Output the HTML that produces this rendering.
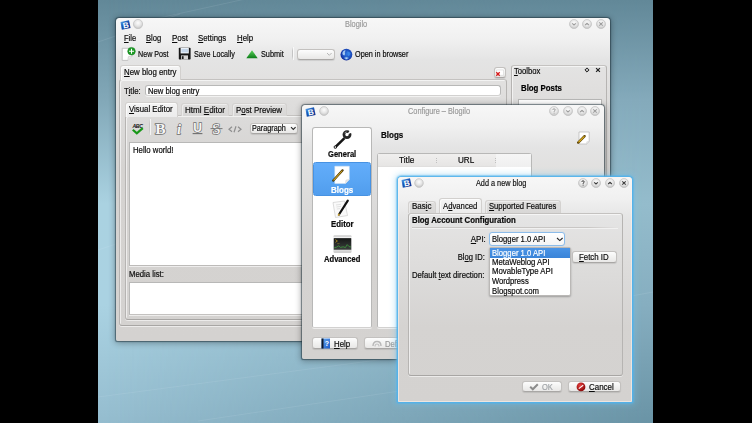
<!DOCTYPE html>
<html><head><meta charset="utf-8">
<style>
*{box-sizing:border-box}
body{margin:0;width:752px;height:423px;background:#000;position:relative;overflow:hidden;font-family:"Liberation Sans",sans-serif;font-size:8.4px;color:#0a0a0a;letter-spacing:0px}
.a{position:absolute}
svg.a{overflow:visible}
.t{position:absolute;white-space:nowrap;line-height:10px;height:10px;-webkit-text-stroke:0.18px currentColor}
.b{font-weight:bold;letter-spacing:0px;-webkit-text-stroke:0.2px currentColor}
.u{text-decoration:underline;text-decoration-thickness:0.8px;text-underline-offset:0.7px}
.grey{color:#9a9a9a}
.win{box-shadow:0 0 1px 0.6px rgba(30,50,60,0.55),0 1px 6px 1px rgba(0,0,0,0.32)}
#desk{left:98px;top:0;width:555px;height:423px;background:linear-gradient(180deg,#628898 0px,#82a8b8 100px,#aad2e1 204px,#aad2e2 304px,#96bed0 414px,#94bcce 423px)}
#desk2{left:98px;top:0;width:555px;height:423px;background:linear-gradient(180deg,#628898 0px,#84aabb 100px,#94bccc 204px,#86aec0 304px,#6c96a8 414px,#6a94a6 423px);
 -webkit-mask-image:linear-gradient(90deg,rgba(0,0,0,0) 8px,rgba(0,0,0,1) 546px);mask-image:linear-gradient(90deg,rgba(0,0,0,0) 8px,rgba(0,0,0,1) 546px)}
</style></head><body>
<div id="desk" class="a"></div><div id="desk2" class="a"></div>
<svg class="a" style="left:0;top:0" width="752" height="423"><g stroke="rgba(235,248,255,0.11)" stroke-width="0.9" fill="none">
<path d="M98 397 L400 357"/><path d="M198 421 L420 388"/><path d="M150 20 L250 -2"/><path d="M98 42 L180 14"/><path d="M610 300 L653 292"/><path d="M98 250 L116 244"/>
</g></svg>

<div class="a win" style="left:116px;top:18px;width:494.00px;height:322.50px;border-radius:3.5px 3.5px 2px 2px;background:linear-gradient(180deg,#f7f7f7 0px,#f0f0f0 22px,#e4e4e4 42px,#e1e0df 65px,#dbdad9 105px,#d5d3d1 150px,#d4d2d0 100%);"></div>
<svg class="a" style="left:119.5px;top:19.5px" width="11" height="10" viewBox="0 0 11 10"><defs><linearGradient id="ai119" x1="0" y1="0" x2="1" y2="1"><stop offset="0" stop-color="#6ab4f4"/><stop offset="0.4" stop-color="#1a5ab8"/><stop offset="1" stop-color="#082a88"/></linearGradient></defs><path d="M0.5 2.0 L9.0 0.3 L10.6 8.0 L1.8 9.8 Z" fill="url(#ai119)"/><text x="5.7" y="8.0" font-family="Liberation Sans" font-weight="bold" font-size="8" fill="#fff" text-anchor="middle" transform="rotate(-11 5.5 5)">B</text></svg>
<svg class="a" style="left:132px;top:18px" width="12" height="12" viewBox="0 0 12 12"><defs><radialGradient id="g1380240" cx="50%" cy="38%" r="60%"><stop offset="0" stop-color="#fdfdfd"/><stop offset="0.6" stop-color="#e4e4e4"/><stop offset="1" stop-color="#c4c4c4"/></radialGradient></defs><circle cx="6" cy="6.4" r="4.6" fill="rgba(0,0,0,0.10)"/><circle cx="6" cy="6" r="4.6" fill="url(#g1380240)" stroke="#c4c4c4" stroke-width="0.7"/></svg>
<div class="t grey" style="top:18.55px;left:344.50px;transform-origin:0 0;transform:scaleX(0.884);">Blogilo</div>
<svg class="a" style="left:567.5px;top:18px" width="12" height="12" viewBox="0 0 12 12"><defs><radialGradient id="g5735240" cx="50%" cy="38%" r="60%"><stop offset="0" stop-color="#fdfdfd"/><stop offset="0.6" stop-color="#e4e4e4"/><stop offset="1" stop-color="#c4c4c4"/></radialGradient></defs><circle cx="6" cy="6.4" r="4.5" fill="rgba(0,0,0,0.10)"/><circle cx="6" cy="6" r="4.5" fill="url(#g5735240)" stroke="#c4c4c4" stroke-width="0.7"/><path d="M4.2 5.3 L6 7 L7.8 5.3" stroke="#9c9c9c" stroke-width="1.1" fill="none"/></svg>
<svg class="a" style="left:581.2px;top:18px" width="12" height="12" viewBox="0 0 12 12"><defs><radialGradient id="g5872240" cx="50%" cy="38%" r="60%"><stop offset="0" stop-color="#fdfdfd"/><stop offset="0.6" stop-color="#e4e4e4"/><stop offset="1" stop-color="#c4c4c4"/></radialGradient></defs><circle cx="6" cy="6.4" r="4.5" fill="rgba(0,0,0,0.10)"/><circle cx="6" cy="6" r="4.5" fill="url(#g5872240)" stroke="#c4c4c4" stroke-width="0.7"/><path d="M4.2 7 L6 5.3 L7.8 7" stroke="#9c9c9c" stroke-width="1.1" fill="none"/></svg>
<svg class="a" style="left:595px;top:18px" width="12" height="12" viewBox="0 0 12 12"><defs><radialGradient id="g6010240" cx="50%" cy="38%" r="60%"><stop offset="0" stop-color="#fdfdfd"/><stop offset="0.6" stop-color="#e4e4e4"/><stop offset="1" stop-color="#c4c4c4"/></radialGradient></defs><circle cx="6" cy="6.4" r="4.5" fill="rgba(0,0,0,0.10)"/><circle cx="6" cy="6" r="4.5" fill="url(#g6010240)" stroke="#c4c4c4" stroke-width="0.7"/><path d="M4.3 4.3 L7.7 7.7 M7.7 4.3 L4.3 7.7" stroke="#9c9c9c" stroke-width="1.1" fill="none"/></svg>
<div class="t " style="top:33.05px;left:124.00px;transform-origin:0 0;transform:scaleX(0.901);"><span class="u">F</span>ile</div>
<div class="t " style="top:33.05px;left:146.40px;transform-origin:0 0;transform:scaleX(0.910);"><span class="u">B</span>log</div>
<div class="t " style="top:33.05px;left:171.70px;transform-origin:0 0;transform:scaleX(0.952);"><span class="u">P</span>ost</div>
<div class="t " style="top:33.05px;left:198.00px;transform-origin:0 0;transform:scaleX(0.932);"><span class="u">S</span>ettings</div>
<div class="t " style="top:33.05px;left:236.60px;transform-origin:0 0;transform:scaleX(0.937);"><span class="u">H</span>elp</div>
<svg class="a" style="left:121px;top:46px" width="16" height="15" viewBox="0 0 16 15"><path d="M1.2 2.3 L11.2 2.3 L11.2 10 L6.8 14.4 L1.2 14.4 Z" fill="#fff" stroke="#b8b8b8" stroke-width="0.8"/><path d="M6.8 14.4 L7.4 10.6 L11.2 10" fill="#ececec" stroke="#c4c4c4" stroke-width="0.6"/><circle cx="10.5" cy="5.2" r="3.8" fill="#1c9c24" stroke="#10781a" stroke-width="0.5"/><path d="M10.5 2.7 V7.7 M8 5.2 H13" stroke="#fff" stroke-width="1.05"/></svg>
<div class="t " style="top:48.55px;left:137.70px;transform-origin:0 0;transform:scaleX(0.854);">New Post</div>
<svg class="a" style="left:178px;top:47px" width="13" height="13" viewBox="0 0 13 13"><rect x="0.8" y="0.8" width="11.8" height="11.8" rx="0.8" fill="#161616"/><rect x="2.6" y="1" width="8.2" height="5.4" fill="#f4f8fc"/><rect x="3.4" y="1.8" width="6.6" height="3.6" fill="#c4d6ea"/><rect x="3" y="8.4" width="7" height="4.2" fill="#d6d6d6"/><rect x="3.8" y="9.2" width="1.8" height="2.8" fill="#1a1a1a"/></svg>
<div class="t " style="top:48.55px;left:194.00px;transform-origin:0 0;transform:scaleX(0.861);">Save Locally</div>
<svg class="a" style="left:245.5px;top:49.5px" width="12" height="9" viewBox="0 0 12 9"><defs><linearGradient id="tri" x1="0" y1="0" x2="0" y2="1"><stop offset="0" stop-color="#5ad25a"/><stop offset="1" stop-color="#0e7d1a"/></linearGradient></defs><path d="M6 0.3 L11.7 8.2 L0.3 8.2 Z" fill="url(#tri)"/></svg>
<div class="t " style="top:48.55px;left:260.60px;transform-origin:0 0;transform:scaleX(0.872);">Submit</div>
<div class="a" style="left:292px;top:47.4px;width:1.00px;height:12.60px;background:linear-gradient(180deg,rgba(0,0,0,0),#c4c4c4 30%,#c4c4c4 70%,rgba(0,0,0,0));box-shadow:1px 0 0 rgba(255,255,255,0.7)"></div>
<div class="a" style="left:296.5px;top:49px;width:38.70px;height:10.60px;border-radius:3px;background:linear-gradient(180deg,#fdfdfd 0%,#f2f2f1 50%,#e9e8e7 100%);border:1px solid #c3c1bf;border-bottom-color:#a9a7a5;box-shadow:0 1px 1px rgba(0,0,0,0.10);"></div>
<svg class="a" style="left:326px;top:52px" width="7" height="5" viewBox="0 0 7 5"><path d="M1 1 L3.3 3.3 L5.6 1" stroke="#b0b0b0" stroke-width="0.9" fill="none"/></svg>
<svg class="a" style="left:340px;top:47.5px" width="13" height="13" viewBox="0 0 13 13"><defs><radialGradient id="glb" cx="55%" cy="45%" r="60%"><stop offset="0" stop-color="#2f78e0"/><stop offset="0.7" stop-color="#1a48b8"/><stop offset="1" stop-color="#0c1c88"/></radialGradient><radialGradient id="glb2" cx="50%" cy="50%" r="50%"><stop offset="0" stop-color="#e8f8ff"/><stop offset="1" stop-color="rgba(120,200,255,0)"/></radialGradient></defs><circle cx="6.4" cy="6.6" r="5.9" fill="url(#glb)"/><path d="M2.6 4.2 Q4 1.8 5.6 2.4 L4.8 4.6 Q5.6 6.2 4.4 7.6 Q3 7.4 2.4 6 Z" fill="#b4d4f6" opacity="0.9"/><path d="M7 3.6 Q9.6 3.4 10.6 5.6 Q10 8 8.4 8.2 Q7.2 6.8 7.6 5.4 Z" fill="#3c88e8" opacity="0.9"/><ellipse cx="6.4" cy="10.2" rx="2.8" ry="1.9" fill="url(#glb2)"/></svg>
<div class="t " style="top:48.55px;left:355.00px;transform-origin:0 0;transform:scaleX(0.868);">Open in browser</div>
<div class="a" style="left:119.3px;top:79px;width:388.20px;height:246.50px;border-radius:3px;border:1px solid #b6b4b2;border-top-color:#c4c2c0;border-bottom-color:#a8a6a4;box-shadow:inset 1px 1px 0 rgba(255,255,255,0.6),0 1px 0 rgba(255,255,255,0.55);"></div>
<div class="a" style="left:119.5px;top:65.2px;width:61.10px;height:14.40px;border-radius:3px 3px 0 0;background:linear-gradient(180deg,#f4f4f4,#ececec);border:1px solid #d2d0ce;border-bottom:none;box-shadow:inset 1px 1px 0 rgba(255,255,255,0.7)"></div>
<div class="t " style="top:67.25px;left:124.00px;transform-origin:0 0;transform:scaleX(0.939);"><span class="u">N</span>ew blog entry</div>
<div class="a" style="left:493.9px;top:66.7px;width:11.80px;height:11.30px;border-radius:3px;background:linear-gradient(180deg,#fdfdfd 0%,#f2f2f1 50%,#e9e8e7 100%);border:1px solid #c3c1bf;border-bottom-color:#a9a7a5;box-shadow:0 1px 1px rgba(0,0,0,0.10);"></div>
<svg class="a" style="left:494px;top:66.7px" width="12" height="11" viewBox="0 0 12 11"><path d="M2.5 3 L9.5 3 L9.5 8.3 L2.5 8.3 Z" fill="#fff" stroke="#d0d0d0" stroke-width="0.5"/><path d="M2.3 5.3 L5.7 8.7 M5.7 5.3 L2.3 8.7" stroke="#d81818" stroke-width="1.3"/></svg>
<div class="t " style="top:85.55px;left:124.00px;transform-origin:0 0;transform:scaleX(0.933);">T<span class="u">i</span>tle:</div>
<div class="a" style="left:145px;top:84.5px;width:356.30px;height:11.90px;background:#fff;border:1px solid #b8b8b7;border-bottom-color:#d2d1d0;border-radius:2px;box-shadow:0 1px 0 rgba(255,255,255,0.6);border-radius:3px;"></div>
<div class="t " style="top:85.55px;left:147.90px;transform-origin:0 0;transform:scaleX(0.917);">New blog entry</div>
<div class="a" style="left:124.5px;top:115.3px;width:395.50px;height:205.00px;border-radius:3px;border:1px solid #b6b4b2;border-top-color:#c4c2c0;border-bottom-color:#a8a6a4;box-shadow:inset 1px 1px 0 rgba(255,255,255,0.6),0 1px 0 rgba(255,255,255,0.55);"></div>
<div class="a" style="left:181.2px;top:103.3px;width:47.40px;height:12.30px;border-radius:3px 3px 0 0;background:linear-gradient(180deg,#e0dfde,#d8d7d6);border:1px solid #d4d2d0;border-bottom:none;box-shadow:inset 1px 1px 0 rgba(255,255,255,0.45)"></div>
<div class="a" style="left:232.2px;top:103.3px;width:54.80px;height:12.30px;border-radius:3px 3px 0 0;background:linear-gradient(180deg,#e0dfde,#d8d7d6);border:1px solid #d4d2d0;border-bottom:none;box-shadow:inset 1px 1px 0 rgba(255,255,255,0.45)"></div>
<div class="a" style="left:125px;top:102.2px;width:52.90px;height:14.60px;border-radius:3px 3px 0 0;background:linear-gradient(180deg,#f4f4f4,#ececec);border:1px solid #d2d0ce;border-bottom:none;box-shadow:inset 1px 1px 0 rgba(255,255,255,0.7)"></div>
<div class="t " style="top:103.55px;left:129.00px;transform-origin:0 0;transform:scaleX(0.932);"><span class="u">V</span>isual Editor</div>
<div class="t " style="top:104.55px;left:184.70px;transform-origin:0 0;transform:scaleX(0.961);">Html <span class="u">E</span>ditor</div>
<div class="t " style="top:104.55px;left:236.00px;transform-origin:0 0;transform:scaleX(0.942);">P<span class="u">o</span>st Preview</div>
<svg class="a" style="left:131px;top:121.5px" width="14" height="13" viewBox="0 0 14 13"><text x="6.6" y="5.6" font-family="Liberation Sans" font-weight="bold" font-style="italic" font-size="5.2" fill="#111" text-anchor="middle" letter-spacing="-0.3">ABC</text><path d="M1.8 7.8 L5.8 11.4 L11.8 6.2" stroke="#189818" stroke-width="2.2" fill="none"/></svg>
<div class="a" style="left:149px;top:118.5px;width:1.00px;height:16.50px;background:linear-gradient(180deg,rgba(0,0,0,0),#c6c6c6 30%,#c6c6c6 70%,rgba(0,0,0,0));box-shadow:1px 0 0 rgba(255,255,255,0.7)"></div>
<svg class="a" style="left:153px;top:120px" width="15" height="16" viewBox="0 0 15 16"><text x="7.3" y="14" font-family="Liberation Serif" font-weight="bold" font-size="15.5" fill="#f6f6f6" stroke="#6e6e6e" stroke-width="1.5" paint-order="stroke" text-anchor="middle">B</text></svg>
<svg class="a" style="left:174px;top:120px" width="10" height="16" viewBox="0 0 10 16"><text x="5" y="14" font-family="Liberation Serif" font-weight="bold" font-style="italic" font-size="14.5" fill="#f6f6f6" stroke="#6e6e6e" stroke-width="1.4" paint-order="stroke" text-anchor="middle">i</text></svg>
<svg class="a" style="left:191px;top:120px" width="13" height="16" viewBox="0 0 13 16"><text x="6.5" y="12.3" font-family="Liberation Sans" font-weight="bold" font-size="12" fill="#f6f6f6" stroke="#6e6e6e" stroke-width="1.4" paint-order="stroke" text-anchor="middle">U</text><path d="M1.6 13.6 H11.4" stroke="#6e6e6e" stroke-width="1.1"/></svg>
<svg class="a" style="left:208.5px;top:120px" width="15" height="16" viewBox="0 0 15 16"><text x="7.3" y="13.6" font-family="Liberation Serif" font-weight="bold" font-size="14.5" fill="#f6f6f6" stroke="#6e6e6e" stroke-width="1.4" paint-order="stroke" text-anchor="middle">S</text><path d="M1.5 8.6 H13.5" stroke="#6e6e6e" stroke-width="0.9"/></svg>
<svg class="a" style="left:227.5px;top:125.5px" width="14" height="7" viewBox="0 0 14 7"><path d="M4 0.8 L1 3.3 L4 5.8 M10 0.8 L13 3.3 L10 5.8 M8 0.3 L6 6.3" stroke="#8e8e8e" stroke-width="1.2" fill="none"/></svg>
<div class="a" style="left:249.6px;top:123px;width:48.50px;height:11.20px;border-radius:3px;background:linear-gradient(180deg,#fdfdfd 0%,#f2f2f1 50%,#e9e8e7 100%);border:1px solid #c3c1bf;border-bottom-color:#a9a7a5;box-shadow:0 1px 1px rgba(0,0,0,0.10);"></div>
<div class="t " style="top:122.55px;left:252.00px;transform-origin:0 0;transform:scaleX(0.864);">Paragraph</div>
<svg class="a" style="left:289.5px;top:126px" width="7" height="5" viewBox="0 0 7 5"><path d="M1 1.2 L3.3 3.5 L5.6 1.2" stroke="#2a2a2a" stroke-width="1.1" fill="none"/></svg>
<div class="a" style="left:129.3px;top:142px;width:390.70px;height:123.50px;background:#fff;border:1px solid #b8b8b7;border-bottom-color:#d2d1d0;border-radius:2px;box-shadow:0 1px 0 rgba(255,255,255,0.6);border-radius:0;border-bottom-color:#bdbbb9"></div>
<div class="t " style="top:144.55px;left:132.60px;transform-origin:0 0;transform:scaleX(0.925);">Hello world!</div>
<div class="t " style="top:268.55px;left:128.60px;transform-origin:0 0;transform:scaleX(0.926);">Media list:</div>
<div class="a" style="left:129.3px;top:281.6px;width:390.70px;height:33.40px;background:#fff;border:1px solid #b8b8b7;border-bottom-color:#d2d1d0;border-radius:2px;box-shadow:0 1px 0 rgba(255,255,255,0.6);border-radius:0;border-bottom-color:#c4c2c0"></div>
<div class="a" style="left:510.6px;top:64.7px;width:96.40px;height:135.30px;border-radius:3px;border:1px solid #b6b4b2;border-top-color:#c4c2c0;border-bottom-color:#a8a6a4;box-shadow:inset 1px 1px 0 rgba(255,255,255,0.6),0 1px 0 rgba(255,255,255,0.55);"></div>
<div class="t " style="top:66.05px;left:514.00px;transform-origin:0 0;transform:scaleX(0.912);"><span class="u">T</span>oolbox</div>
<svg class="a" style="left:583.5px;top:67.3px" width="6" height="6" viewBox="0 0 6 6"><path d="M3 0.9 L5.1 3 L3 5.1 L0.9 3 Z" fill="none" stroke="#222" stroke-width="1"/><circle cx="3" cy="3" r="0.5" fill="#222"/></svg>
<svg class="a" style="left:595px;top:67.3px" width="6" height="6" viewBox="0 0 6 6"><path d="M1.1 1.1 L4.9 4.9 M4.9 1.1 L1.1 4.9" stroke="#222" stroke-width="1.2"/></svg>
<div class="t b" style="top:82.55px;left:520.60px;transform-origin:0 0;transform:scaleX(0.935);color:#000;-webkit-text-stroke:0.2px #000">Blog Posts</div>
<div class="a" style="left:517.5px;top:99px;width:84.70px;height:101.00px;background:#fff;border:1px solid #b8b8b7;border-bottom-color:#d2d1d0;border-radius:2px;box-shadow:0 1px 0 rgba(255,255,255,0.6);border-radius:0"></div>
<div class="a win" style="left:302px;top:105.3px;width:301.80px;height:253.70px;border-radius:3.5px 3.5px 2px 2px;background:linear-gradient(180deg,#f7f7f7 0px,#f0f0f0 22px,#e4e4e4 42px,#e1e0df 65px,#dbdad9 105px,#d5d3d1 150px,#d4d2d0 100%);"></div>
<svg class="a" style="left:305px;top:106.5px" width="11" height="10" viewBox="0 0 11 10"><defs><linearGradient id="ai305" x1="0" y1="0" x2="1" y2="1"><stop offset="0" stop-color="#6ab4f4"/><stop offset="0.4" stop-color="#1a5ab8"/><stop offset="1" stop-color="#082a88"/></linearGradient></defs><path d="M0.5 2.0 L9.0 0.3 L10.6 8.0 L1.8 9.8 Z" fill="url(#ai305)"/><text x="5.7" y="8.0" font-family="Liberation Sans" font-weight="bold" font-size="8" fill="#fff" text-anchor="middle" transform="rotate(-11 5.5 5)">B</text></svg>
<svg class="a" style="left:317.5px;top:105.3px" width="12" height="12" viewBox="0 0 12 12"><defs><radialGradient id="g32351113" cx="50%" cy="38%" r="60%"><stop offset="0" stop-color="#fdfdfd"/><stop offset="0.6" stop-color="#e4e4e4"/><stop offset="1" stop-color="#c4c4c4"/></radialGradient></defs><circle cx="6" cy="6.4" r="4.4" fill="rgba(0,0,0,0.10)"/><circle cx="6" cy="6" r="4.4" fill="url(#g32351113)" stroke="#c4c4c4" stroke-width="0.7"/></svg>
<div class="t grey" style="top:105.75px;left:407.90px;transform-origin:0 0;transform:scaleX(0.876);">Configure – Blogilo</div>
<svg class="a" style="left:548.2px;top:105.3px" width="12" height="12" viewBox="0 0 12 12"><defs><radialGradient id="g55421113" cx="50%" cy="38%" r="60%"><stop offset="0" stop-color="#fdfdfd"/><stop offset="0.6" stop-color="#e4e4e4"/><stop offset="1" stop-color="#c4c4c4"/></radialGradient></defs><circle cx="6" cy="6.4" r="4.5" fill="rgba(0,0,0,0.10)"/><circle cx="6" cy="6" r="4.5" fill="url(#g55421113)" stroke="#c4c4c4" stroke-width="0.7"/><path d="M4.8 4.9 Q4.9 3.8 6 3.8 Q7.2 3.8 7.2 4.9 Q7.2 5.7 6.1 6.2 L6.1 6.9" stroke="#9c9c9c" stroke-width="1" fill="none"/><circle cx="6.1" cy="8.1" r="0.55" fill="#9c9c9c"/></svg>
<svg class="a" style="left:562px;top:105.3px" width="12" height="12" viewBox="0 0 12 12"><defs><radialGradient id="g56801113" cx="50%" cy="38%" r="60%"><stop offset="0" stop-color="#fdfdfd"/><stop offset="0.6" stop-color="#e4e4e4"/><stop offset="1" stop-color="#c4c4c4"/></radialGradient></defs><circle cx="6" cy="6.4" r="4.5" fill="rgba(0,0,0,0.10)"/><circle cx="6" cy="6" r="4.5" fill="url(#g56801113)" stroke="#c4c4c4" stroke-width="0.7"/><path d="M4.2 5.3 L6 7 L7.8 5.3" stroke="#9c9c9c" stroke-width="1.1" fill="none"/></svg>
<svg class="a" style="left:575.8px;top:105.3px" width="12" height="12" viewBox="0 0 12 12"><defs><radialGradient id="g58181113" cx="50%" cy="38%" r="60%"><stop offset="0" stop-color="#fdfdfd"/><stop offset="0.6" stop-color="#e4e4e4"/><stop offset="1" stop-color="#c4c4c4"/></radialGradient></defs><circle cx="6" cy="6.4" r="4.5" fill="rgba(0,0,0,0.10)"/><circle cx="6" cy="6" r="4.5" fill="url(#g58181113)" stroke="#c4c4c4" stroke-width="0.7"/><path d="M4.2 7 L6 5.3 L7.8 7" stroke="#9c9c9c" stroke-width="1.1" fill="none"/></svg>
<svg class="a" style="left:589.3px;top:105.3px" width="12" height="12" viewBox="0 0 12 12"><defs><radialGradient id="g59531113" cx="50%" cy="38%" r="60%"><stop offset="0" stop-color="#fdfdfd"/><stop offset="0.6" stop-color="#e4e4e4"/><stop offset="1" stop-color="#c4c4c4"/></radialGradient></defs><circle cx="6" cy="6.4" r="4.5" fill="rgba(0,0,0,0.10)"/><circle cx="6" cy="6" r="4.5" fill="url(#g59531113)" stroke="#c4c4c4" stroke-width="0.7"/><path d="M4.3 4.3 L7.7 7.7 M7.7 4.3 L4.3 7.7" stroke="#9c9c9c" stroke-width="1.1" fill="none"/></svg>
<div class="a" style="left:312px;top:126.6px;width:60.00px;height:201.40px;background:#fff;border:1px solid #b8b8b7;border-bottom-color:#d2d1d0;border-radius:2px;box-shadow:0 1px 0 rgba(255,255,255,0.6);border-radius:3px 3px 2px 2px"></div>
<div class="a" style="left:313.2px;top:162px;width:57.60px;height:34.00px;background:linear-gradient(180deg,#63adfb 0%,#5aa6f4 50%,#519ded 100%);border:1px solid #4792e2;border-radius:2.5px"></div>
<svg class="a" style="left:331px;top:129px" width="22" height="22" viewBox="0 0 22 22"><path d="M3.4 17.2 L12.6 8.2 L14.4 10 L5.2 19 Z" fill="#151515"/><circle cx="4.3" cy="18.1" r="1.7" fill="#151515"/><circle cx="4.3" cy="18.1" r="0.8" fill="#fff"/><circle cx="16" cy="5.6" r="3.1" fill="none" stroke="#262626" stroke-width="2.7"/><path d="M13.6 4.2 A2.4 2.4 0 0 1 15.6 3" stroke="#e0e0e0" stroke-width="0.7" fill="none"/><path d="M16 5.6 L19.6 0.6 L21.2 3.4 Z" fill="#fff"/></svg>
<div class="t b" style="top:149.15px;left:327.70px;transform-origin:0 0;transform:scaleX(0.905);">General</div>
<svg class="a" style="left:332px;top:164.5px" width="19" height="20" viewBox="0 0 19 20"><path d="M2.8 1.2 L17.3 1.2 L17.3 14.5 L13.5 18.5 L2.8 18.5 Z" fill="#fff" stroke="#d8e4f0" stroke-width="0.5"/><path d="M13.5 18.5 L14 15 L17.3 14.5" fill="#e8e8e8" stroke="#cfcfcf" stroke-width="0.5"/><path d="M1.3 15.6 L10.6 5.3" stroke="#3a2a00" stroke-width="2.2" stroke-linecap="round"/><path d="M1.5 15.3 L10.4 5.5" stroke="#d4a820" stroke-width="1.1"/></svg>
<div class="t b" style="top:184.55px;left:330.60px;transform-origin:0 0;transform:scaleX(0.956);color:#fff">Blogs</div>
<svg class="a" style="left:331px;top:199px" width="20" height="21" viewBox="0 0 20 21"><path d="M2 3.5 L13.5 2 L16.5 16.5 L4.5 18.5 Z" fill="#fafafa" stroke="#cfcfcf" stroke-width="0.7"/><path d="M5 6 L10 5.3 M5.4 8 L10 7.4 M5.8 10 L9 9.6" stroke="#d0d0d0" stroke-width="0.6"/><path d="M8 15.5 L16.8 1.6" stroke="#111" stroke-width="2.2" stroke-linecap="round"/><path d="M7.2 16.6 L8.4 14.8" stroke="#c8a030" stroke-width="1.6"/></svg>
<div class="t b" style="top:218.55px;left:330.60px;transform-origin:0 0;transform:scaleX(0.935);">Editor</div>
<svg class="a" style="left:332.5px;top:234.5px" width="19" height="18" viewBox="0 0 19 18"><defs><linearGradient id="term" x1="0" y1="0" x2="0" y2="1"><stop offset="0" stop-color="#b4b4b4"/><stop offset="0.12" stop-color="#f4f4f4"/><stop offset="0.2" stop-color="#8c8c8c"/><stop offset="0.8" stop-color="#8c8c8c"/><stop offset="0.9" stop-color="#f0f0f0"/><stop offset="1" stop-color="#9a9a9a"/></linearGradient><linearGradient id="scr" x1="0" y1="0" x2="0" y2="1"><stop offset="0" stop-color="#151716"/><stop offset="1" stop-color="#3a3f3c"/></linearGradient></defs><rect x="0.4" y="0.4" width="18.2" height="17.2" rx="1" fill="url(#term)"/><rect x="1" y="3.2" width="17" height="11.4" fill="url(#scr)"/><path d="M2.4 4.6 L4.4 6 L2.4 7.4" stroke="#b8901c" stroke-width="0.8" fill="none"/><path d="M4.2 8.6 H6.6" stroke="#8a7a2a" stroke-width="0.6"/><path d="M1.2 12.8 L3.5 12.2 L5.6 10.9 L7.6 12.4 L10.2 11.8 L12.4 12.6 L14.2 9.6 L16 11.6 L18 12" stroke="#3f9a3f" stroke-width="0.8" fill="none"/></svg>
<div class="t b" style="top:253.55px;left:324.00px;transform-origin:0 0;transform:scaleX(0.907);">Advanced</div>
<div class="t b" style="top:130.35px;left:380.60px;transform-origin:0 0;transform:scaleX(0.956);">Blogs</div>
<svg class="a" style="left:576.5px;top:130.5px" width="14" height="14" viewBox="0 0 14 14"><path d="M2 1 L12.2 1 L12.2 10.5 L9.5 13 L2 13 Z" fill="#fff" stroke="#b4b4b4" stroke-width="0.7"/><path d="M9.5 13 L9.8 10.8 L12.2 10.5" fill="#e4e4e4" stroke="#cfcfcf" stroke-width="0.5"/><path d="M1.2 11.6 L7.6 5.2" stroke="#5a4000" stroke-width="2.4" stroke-linecap="round"/><path d="M1.5 11.2 L7.4 5.4" stroke="#d8aa20" stroke-width="1.3"/></svg>
<div class="a" style="left:376.5px;top:153px;width:155.30px;height:174.80px;background:#fff;border:1px solid #b8b8b7;border-bottom-color:#d2d1d0;border-radius:2px;box-shadow:0 1px 0 rgba(255,255,255,0.6);border-radius:3px 3px 2px 2px"></div>
<div class="a" style="left:377.5px;top:154px;width:153.30px;height:13.00px;background:linear-gradient(180deg,#f0efee,#e6e5e4);border-bottom:1px solid #e0dfde"></div>
<div class="a" style="left:495.6px;top:154px;width:35.20px;height:13.00px;background:linear-gradient(180deg,#f6f6f6,#efefef)"></div>
<div class="t " style="top:155.35px;left:399.40px;transform-origin:0 0;transform:scaleX(0.990);">Title</div>
<div class="t " style="top:155.35px;left:458.20px;transform-origin:0 0;transform:scaleX(0.970);">URL</div>
<div class="a" style="left:436px;top:157.5px;width:1.00px;height:6.00px;background:repeating-linear-gradient(180deg,#c0c0c0 0 1px,transparent 1px 2px)"></div>
<div class="a" style="left:495.3px;top:157.5px;width:1.00px;height:6.00px;background:repeating-linear-gradient(180deg,#c0c0c0 0 1px,transparent 1px 2px)"></div>
<div class="a" style="left:311.8px;top:336.8px;width:46.40px;height:12.20px;border-radius:3px;background:linear-gradient(180deg,#fdfdfd 0%,#f2f2f1 50%,#e9e8e7 100%);border:1px solid #c3c1bf;border-bottom-color:#a9a7a5;box-shadow:0 1px 1px rgba(0,0,0,0.10);"></div>
<svg class="a" style="left:320.5px;top:337.8px" width="10" height="11" viewBox="0 0 10 11"><defs><linearGradient id="hb" x1="0" y1="0" x2="1" y2="1"><stop offset="0" stop-color="#6aaaf0"/><stop offset="1" stop-color="#1a5ac8"/></linearGradient></defs><rect x="0.5" y="0.5" width="8.5" height="10" fill="url(#hb)"/><rect x="0.5" y="0.5" width="2" height="10" fill="#101828"/><text x="6" y="8" font-family="Liberation Sans" font-weight="bold" font-size="7" fill="#fff" text-anchor="middle">?</text></svg>
<div class="t " style="top:338.75px;left:333.80px;transform-origin:0 0;transform:scaleX(0.937);"><span class="u">H</span>elp</div>
<div class="a" style="left:363.7px;top:336.8px;width:56.30px;height:12.20px;border-radius:3px;background:linear-gradient(180deg,#fdfdfd 0%,#f2f2f1 50%,#e9e8e7 100%);border:1px solid #c3c1bf;border-bottom-color:#a9a7a5;box-shadow:0 1px 1px rgba(0,0,0,0.10);"></div>
<svg class="a" style="left:370.5px;top:338.5px" width="12" height="10" viewBox="0 0 12 10"><path d="M2 7 Q2 2.5 6 2.5 Q10 2.5 10 7" stroke="#b8b8b8" stroke-width="1.4" fill="none"/><path d="M4 7.5 Q4 5 6 5 Q8 5 8 7.5" stroke="#c4c4c4" stroke-width="1.2" fill="none"/></svg>
<div class="t grey" style="top:338.75px;left:385.00px;transform-origin:0 0;transform:scaleX(0.920);">Defaults</div>
<div class="a win" style="left:398px;top:177px;width:233.70px;height:225.00px;border-radius:3.5px 3.5px 2px 2px;background:linear-gradient(180deg,#f7f7f7 0px,#f0f0f0 22px,#e4e4e4 42px,#e1e0df 65px,#dbdad9 105px,#d5d3d1 150px,#d4d2d0 100%);box-shadow:inset 0 0 0 1px rgba(255,244,236,0.55),0 0 0 1px rgba(80,178,236,0.75),0 0 1.5px 1.8px rgba(80,176,232,0.6),0 0 6px 2.5px rgba(120,200,240,0.4);border-radius:3.5px 3.5px 1px 1px"></div>
<svg class="a" style="left:400.8px;top:178.2px" width="11" height="10" viewBox="0 0 11 10"><defs><linearGradient id="ai400" x1="0" y1="0" x2="1" y2="1"><stop offset="0" stop-color="#6ab4f4"/><stop offset="0.4" stop-color="#1a5ab8"/><stop offset="1" stop-color="#082a88"/></linearGradient></defs><path d="M0.5 2.0 L9.0 0.3 L10.6 8.0 L1.8 9.8 Z" fill="url(#ai400)"/><text x="5.7" y="8.0" font-family="Liberation Sans" font-weight="bold" font-size="8" fill="#fff" text-anchor="middle" transform="rotate(-11 5.5 5)">B</text></svg>
<svg class="a" style="left:413.4px;top:176.8px" width="12" height="12" viewBox="0 0 12 12"><defs><radialGradient id="g41941828" cx="50%" cy="38%" r="60%"><stop offset="0" stop-color="#fdfdfd"/><stop offset="0.6" stop-color="#e4e4e4"/><stop offset="1" stop-color="#c4c4c4"/></radialGradient></defs><circle cx="6" cy="6.4" r="4.3" fill="rgba(0,0,0,0.10)"/><circle cx="6" cy="6" r="4.3" fill="url(#g41941828)" stroke="#c4c4c4" stroke-width="0.7"/></svg>
<div class="t " style="top:177.55px;left:475.80px;transform-origin:0 0;transform:scaleX(0.872);color:#111">Add a new blog</div>
<svg class="a" style="left:576.6px;top:176.8px" width="12" height="12" viewBox="0 0 12 12"><defs><radialGradient id="g58261828" cx="50%" cy="38%" r="60%"><stop offset="0" stop-color="#fdfdfd"/><stop offset="0.6" stop-color="#e4e4e4"/><stop offset="1" stop-color="#c4c4c4"/></radialGradient></defs><circle cx="6" cy="6.4" r="4.5" fill="rgba(0,0,0,0.10)"/><circle cx="6" cy="6" r="4.5" fill="url(#g58261828)" stroke="#c4c4c4" stroke-width="0.7"/><path d="M4.8 4.9 Q4.9 3.8 6 3.8 Q7.2 3.8 7.2 4.9 Q7.2 5.7 6.1 6.2 L6.1 6.9" stroke="#3a3a3a" stroke-width="1" fill="none"/><circle cx="6.1" cy="8.1" r="0.55" fill="#3a3a3a"/></svg>
<svg class="a" style="left:590.3px;top:176.8px" width="12" height="12" viewBox="0 0 12 12"><defs><radialGradient id="g59631828" cx="50%" cy="38%" r="60%"><stop offset="0" stop-color="#fdfdfd"/><stop offset="0.6" stop-color="#e4e4e4"/><stop offset="1" stop-color="#c4c4c4"/></radialGradient></defs><circle cx="6" cy="6.4" r="4.5" fill="rgba(0,0,0,0.10)"/><circle cx="6" cy="6" r="4.5" fill="url(#g59631828)" stroke="#c4c4c4" stroke-width="0.7"/><path d="M4.2 5.3 L6 7 L7.8 5.3" stroke="#3a3a3a" stroke-width="1.1" fill="none"/></svg>
<svg class="a" style="left:603.8px;top:176.8px" width="12" height="12" viewBox="0 0 12 12"><defs><radialGradient id="g60981828" cx="50%" cy="38%" r="60%"><stop offset="0" stop-color="#fdfdfd"/><stop offset="0.6" stop-color="#e4e4e4"/><stop offset="1" stop-color="#c4c4c4"/></radialGradient></defs><circle cx="6" cy="6.4" r="4.5" fill="rgba(0,0,0,0.10)"/><circle cx="6" cy="6" r="4.5" fill="url(#g60981828)" stroke="#c4c4c4" stroke-width="0.7"/><path d="M4.2 7 L6 5.3 L7.8 7" stroke="#3a3a3a" stroke-width="1.1" fill="none"/></svg>
<svg class="a" style="left:617.5px;top:176.8px" width="12" height="12" viewBox="0 0 12 12"><defs><radialGradient id="g62351828" cx="50%" cy="38%" r="60%"><stop offset="0" stop-color="#fdfdfd"/><stop offset="0.6" stop-color="#e4e4e4"/><stop offset="1" stop-color="#c4c4c4"/></radialGradient></defs><circle cx="6" cy="6.4" r="4.5" fill="rgba(0,0,0,0.10)"/><circle cx="6" cy="6" r="4.5" fill="url(#g62351828)" stroke="#c4c4c4" stroke-width="0.7"/><path d="M4.3 4.3 L7.7 7.7 M7.7 4.3 L4.3 7.7" stroke="#3a3a3a" stroke-width="1.1" fill="none"/></svg>
<div class="a" style="left:408px;top:212.5px;width:214.60px;height:163.00px;border-radius:3px;border:1px solid #b6b4b2;border-top-color:#c4c2c0;border-bottom-color:#a8a6a4;box-shadow:inset 1px 1px 0 rgba(255,255,255,0.6),0 1px 0 rgba(255,255,255,0.55);"></div>
<div class="a" style="left:408.3px;top:200.6px;width:27.60px;height:12.30px;border-radius:3px 3px 0 0;background:linear-gradient(180deg,#e0dfde,#d8d7d6);border:1px solid #d4d2d0;border-bottom:none;box-shadow:inset 1px 1px 0 rgba(255,255,255,0.45)"></div>
<div class="a" style="left:485px;top:200px;width:75.80px;height:12.90px;border-radius:3px 3px 0 0;background:linear-gradient(180deg,#e0dfde,#d8d7d6);border:1px solid #d4d2d0;border-bottom:none;box-shadow:inset 1px 1px 0 rgba(255,255,255,0.45)"></div>
<div class="a" style="left:439px;top:198.2px;width:43.10px;height:15.30px;border-radius:3px 3px 0 0;background:linear-gradient(180deg,#f4f4f4,#ececec);border:1px solid #d2d0ce;border-bottom:none;box-shadow:inset 1px 1px 0 rgba(255,255,255,0.7)"></div>
<div class="t " style="top:201.05px;left:412.00px;transform-origin:0 0;transform:scaleX(0.954);">Bas<span class="u">i</span>c</div>
<div class="t " style="top:200.55px;left:443.00px;transform-origin:0 0;transform:scaleX(0.921);">A<span class="u">d</span>vanced</div>
<div class="t " style="top:200.75px;left:489.00px;transform-origin:0 0;transform:scaleX(0.908);"><span class="u">S</span>upported Features</div>
<div class="t b" style="top:215.35px;left:412.00px;transform-origin:0 0;transform:scaleX(0.932);">Blog Account Configuration</div>
<div class="a" style="left:412px;top:226.8px;width:206.00px;height:1.00px;background:linear-gradient(90deg,#c8c6c4,#c8c6c4 85%,rgba(200,198,196,0));box-shadow:0 1px 0 rgba(255,255,255,0.5)"></div>
<div class="t " style="top:234.05px;right:266.50px;transform-origin:100% 0;transform:scaleX(0.951);"><span class="u">A</span>PI:</div>
<div class="a" style="left:489.2px;top:232.2px;width:76.20px;height:13.50px;border-radius:3px;background:linear-gradient(180deg,#fdfdfd 0%,#f2f2f1 50%,#e9e8e7 100%);border:1px solid #c3c1bf;border-bottom-color:#a9a7a5;box-shadow:0 1px 1px rgba(0,0,0,0.10);background:linear-gradient(180deg,#ffffff,#f4f4f4);border-color:#8cbcea;box-shadow:0 0 1px #a8d0f4"></div>
<div class="t " style="top:233.95px;left:492.00px;transform-origin:0 0;transform:scaleX(0.917);">Blogger 1.0 API</div>
<svg class="a" style="left:555.5px;top:236.5px" width="8" height="5" viewBox="0 0 8 5"><path d="M1 1 L3.8 3.6 L6.6 1" stroke="#222" stroke-width="1.1" fill="none"/></svg>
<div class="t " style="top:251.75px;right:267.30px;transform-origin:100% 0;transform:scaleX(0.907);">Bl<span class="u">o</span>g ID:</div>
<div class="a" style="left:571.6px;top:251.3px;width:45.60px;height:11.40px;border-radius:3px;background:linear-gradient(180deg,#fdfdfd 0%,#f2f2f1 50%,#e9e8e7 100%);border:1px solid #c3c1bf;border-bottom-color:#a9a7a5;box-shadow:0 1px 1px rgba(0,0,0,0.10);"></div>
<div class="t " style="top:251.75px;left:579.00px;transform-origin:0 0;transform:scaleX(0.939);"><span class="u">F</span>etch ID</div>
<div class="t " style="top:269.55px;left:412.20px;transform-origin:0 0;transform:scaleX(0.919);">Default <span class="u">t</span>ext direction:</div>
<div class="a" style="left:489px;top:246.6px;width:81.70px;height:49.60px;background:#fff;border:1px solid #bab8b6;border-radius:2px;box-shadow:0 1px 2px rgba(0,0,0,0.28)"></div>
<div class="a" style="left:490.4px;top:248px;width:79.20px;height:9.50px;background:linear-gradient(180deg,#4a94e6,#3a84d8)"></div>
<div class="t " style="top:247.55px;left:492.00px;transform-origin:0 0;transform:scaleX(0.917);color:#fff">Blogger 1.0 API</div>
<div class="t " style="top:256.75px;left:492.00px;transform-origin:0 0;transform:scaleX(0.926);">MetaWeblog API</div>
<div class="t " style="top:266.35px;left:492.00px;transform-origin:0 0;transform:scaleX(0.933);">MovableType API</div>
<div class="t " style="top:275.95px;left:492.00px;transform-origin:0 0;transform:scaleX(0.910);">Wordpress</div>
<div class="t " style="top:285.55px;left:492.00px;transform-origin:0 0;transform:scaleX(0.924);">Blogspot.com</div>
<div class="a" style="left:521.5px;top:381.2px;width:40.30px;height:11.00px;border-radius:3px;background:linear-gradient(180deg,#fdfdfd 0%,#f2f2f1 50%,#e9e8e7 100%);border:1px solid #c3c1bf;border-bottom-color:#a9a7a5;box-shadow:0 1px 1px rgba(0,0,0,0.10);"></div>
<svg class="a" style="left:529.3px;top:382.5px" width="10" height="8" viewBox="0 0 10 8"><path d="M1.2 3.8 L3.8 6.3 L8.8 1.2" stroke="#8c8c8c" stroke-width="2" fill="none"/></svg>
<div class="t grey" style="top:381.55px;left:542.40px;transform-origin:0 0;transform:scaleX(0.898);color:#a0a4a8">OK</div>
<div class="a" style="left:568px;top:381.2px;width:53.00px;height:11.00px;border-radius:3px;background:linear-gradient(180deg,#fdfdfd 0%,#f2f2f1 50%,#e9e8e7 100%);border:1px solid #c3c1bf;border-bottom-color:#a9a7a5;box-shadow:0 1px 1px rgba(0,0,0,0.10);"></div>
<svg class="a" style="left:575.5px;top:382px" width="10" height="10" viewBox="0 0 10 10"><defs><radialGradient id="cg" cx="40%" cy="35%" r="65%"><stop offset="0" stop-color="#e84040"/><stop offset="1" stop-color="#8a0808"/></radialGradient></defs><circle cx="5" cy="4.9" r="4.4" fill="url(#cg)"/><path d="M2.8 6.6 L7.2 3.2" stroke="#fff" stroke-width="1.1"/></svg>
<div class="t " style="top:381.55px;left:588.50px;transform-origin:0 0;transform:scaleX(0.948);"><span class="u">C</span>ancel</div>
</body></html>
